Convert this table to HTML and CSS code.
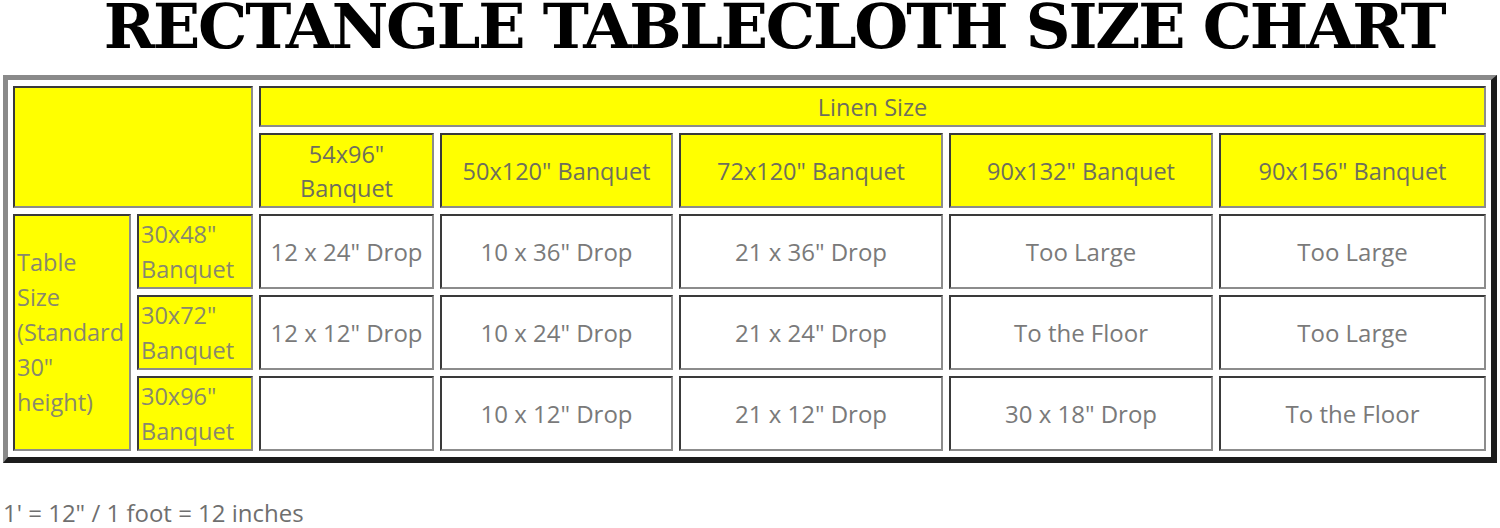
FILE: index.html
```html
<!DOCTYPE html>
<html>
<head>
<meta charset="utf-8">
<link rel="stylesheet" href="styles.css">
</head>
<body>
<h1 class="title">RECTANGLE TABLECLOTH SIZE CHART</h1>
<div class="chart">
  <div class="grid">
    <div class="cell yellow corner"></div>
    <div class="cell yellow head linen">Linen Size</div>
    <div class="cell yellow head">54x96"<br>Banquet</div>
    <div class="cell yellow head">50x120" Banquet</div>
    <div class="cell yellow head">72x120" Banquet</div>
    <div class="cell yellow head">90x132" Banquet</div>
    <div class="cell yellow head">90x156" Banquet</div>

    <div class="cell yellow side tablesize">Table<br>Size<br>(Standard<br>30"<br>height)</div>

    <div class="cell yellow side">30x48"<br>Banquet</div>
    <div class="cell body">12 x 24" Drop</div>
    <div class="cell body">10 x 36" Drop</div>
    <div class="cell body">21 x 36" Drop</div>
    <div class="cell body">Too Large</div>
    <div class="cell body">Too Large</div>

    <div class="cell yellow side">30x72"<br>Banquet</div>
    <div class="cell body">12 x 12" Drop</div>
    <div class="cell body">10 x 24" Drop</div>
    <div class="cell body">21 x 24" Drop</div>
    <div class="cell body">To the Floor</div>
    <div class="cell body">Too Large</div>

    <div class="cell yellow side">30x96"<br>Banquet</div>
    <div class="cell body"></div>
    <div class="cell body">10 x 12" Drop</div>
    <div class="cell body">21 x 12" Drop</div>
    <div class="cell body">30 x 18" Drop</div>
    <div class="cell body">To the Floor</div>
  </div>
</div>
<p class="note">1' = 12" / 1 foot = 12 inches</p>
</body>
</html>
```
FILE: styles.css
```css
html, body {
  margin: 0;
  padding: 0;
  background: #ffffff;
}
body {
  width: 1500px;
  height: 528px;
  overflow: hidden;
  font-family: "Open Sans", "DejaVu Sans", sans-serif;
}
.title {
  margin: 0 0 21px 0;
  padding-left: 48px;
  height: 54px;
  line-height: 54px;
  font-family: "DejaVu Serif", serif;
  font-weight: bold;
  font-size: 62px;
  letter-spacing: -2.2px;
  text-align: center;
  color: #000;
  white-space: nowrap;
}
.chart {
  margin-left: 3px;
  width: 1494px;
  box-sizing: border-box;
  border-style: solid;
  border-width: 5px 6px 6px 5px;
  border-color: #8a8a8a #1c1c1c #1c1c1c #8a8a8a;
  padding: 6px 5px 6px 5px;
  background: #fff;
}
.grid {
  display: grid;
  grid-template-columns: 118px 116px 175px 233px 264px 264px 267px;
  grid-template-rows: 41px 75px 75px 75px 75px;
  gap: 6px;
}
.cell {
  box-sizing: border-box;
  border: 2px solid;
  border-color: #3a3a3a #8c8c8c #8c8c8c #3a3a3a;
  display: flex;
  align-items: center;
  justify-content: center;
  text-align: center;
  padding: 0 2px;
  white-space: nowrap;
}
.yellow {
  background: #ffff00;
}
.corner {
  grid-column: 1 / 3;
  grid-row: 1 / 3;
}
.linen {
  grid-column: 3 / 8;
  grid-row: 1;
}
.head {
  font-size: 23.5px;
  line-height: 34px;
  color: #6e6e5e;
}
.side {
  justify-content: flex-start;
  text-align: left;
  font-size: 23.5px;
  line-height: 35px;
  color: #88886e;
  padding: 0 0 0 2px;
}
.tablesize {
  grid-column: 1;
  grid-row: 3 / 6;
}
.body {
  background: #fff;
  font-size: 24px;
  color: #7a7a7a;
}
.note {
  margin: 37px 0 0 0;
  padding-left: 3px;
  font-size: 24px;
  line-height: 26px;
  color: #6f6f6f;
  white-space: nowrap;
}
```
